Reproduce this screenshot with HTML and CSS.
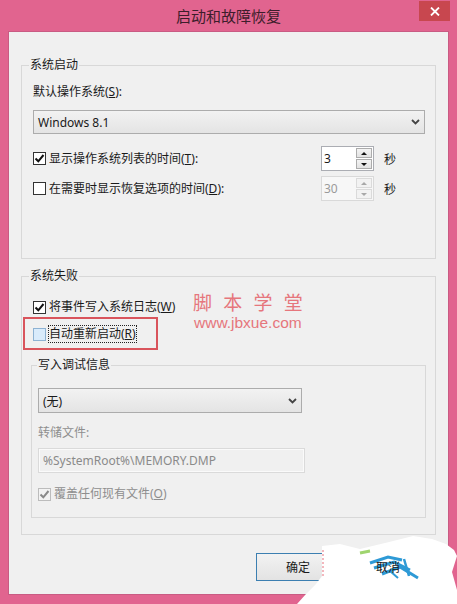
FILE: index.html
```html
<!DOCTYPE html>
<html lang="zh">
<head>
<meta charset="utf-8">
<title>启动和故障恢复</title>
<link rel="stylesheet" href="styles.css">
</head>
<body>
<div class="window">
  <div class="titlebar">
    <div class="title">启动和故障恢复</div>
    <div class="close"><svg width="10" height="9" viewBox="0 0 10 9"><path d="M1 0.5 L9 8.5 M9 0.5 L1 8.5" stroke="#fff" stroke-width="1.8" fill="none"/></svg></div>
  </div>
  <div class="panel">
    <fieldset class="group g1">
      <legend>系统启动</legend>
      <div class="label">默认操作系统(<u>S</u>):</div>
      <div class="select wide"><span>Windows 8.1</span><svg class="chev" width="9" height="6" viewBox="0 0 9 6"><path d="M1 1 L4.5 4.5 L8 1" stroke="#444" stroke-width="1.8" fill="none"/></svg></div>
      <div class="row r1">
        <div class="check"><span class="box"><svg width="11" height="11" viewBox="0 0 11 11"><path d="M1.5 5.5 L4.3 8.3 L9.5 2" stroke="#111" stroke-width="2" fill="none"/></svg></span><span>显示操作系统列表的时间(<u>T</u>):</span></div>
        <div class="spin"><span class="val">3</span><span class="arrows"><span class="arr"><i class="tri up"></i></span><span class="arr"><i class="tri down"></i></span></span></div>
        <span class="unit">秒</span>
      </div>
      <div class="row r2">
        <div class="check"><span class="box"></span><span>在需要时显示恢复选项的时间(<u>D</u>):</span></div>
        <div class="spin off"><span class="val">30</span><span class="arrows"><span class="arr"><i class="tri up"></i></span><span class="arr"><i class="tri down"></i></span></span></div>
        <span class="unit">秒</span>
      </div>
    </fieldset>

    <fieldset class="group g2">
      <legend>系统失败</legend>
      <div class="check rw"><span class="box"><svg width="11" height="11" viewBox="0 0 11 11"><path d="M1.5 5.5 L4.3 8.3 L9.5 2" stroke="#111" stroke-width="2" fill="none"/></svg></span><span>将事件写入系统日志(<u>W</u>)</span></div>
      <div class="hl">
        <div class="check"><span class="box hover"></span><span class="focus">自动重新启动(<u>R</u>)</span></div>
      </div>
      <fieldset class="group g3">
        <legend>写入调试信息</legend>
        <div class="select s2"><span>(无)</span><svg class="chev" width="9" height="6" viewBox="0 0 9 6"><path d="M1 1 L4.5 4.5 L8 1" stroke="#444" stroke-width="1.8" fill="none"/></svg></div>
        <div class="label dis dump">转储文件:</div>
        <div class="field">%SystemRoot%\MEMORY.DMP</div>
        <div class="check dis ro"><span class="box disbox"><svg width="11" height="11" viewBox="0 0 11 11"><path d="M1.5 5.5 L4.3 8.3 L9.5 2" stroke="#8a8a8a" stroke-width="2" fill="none"/></svg></span><span>覆盖任何现有文件(<u>O</u>)</span></div>
      </fieldset>
    </fieldset>

    <div class="buttons">
      <div class="btn default"><span class="btxt">确定</span></div>
      <div class="btn"><span class="btxt top">取消</span></div>
    </div>
  </div>

  <div class="watermark">
    <div class="wm-cn">脚 本 学 堂</div>
    <div class="wm-en">www.jbxue.com</div>
  </div>

  <svg class="blob" width="167" height="74" viewBox="0 0 167 74">
    <path d="M32 16 L50 14 L70 19 L95 13 L123 6 L142 9 L156 14 L164 20 L167 26 L162 42 L167 60 L167 74 L7 74 L16 64 L26 54 L32 46 Z" fill="#ffffff"/>
    <path d="M33 20 L33 46" stroke="#f0a0a8" stroke-width="1.5" stroke-dasharray="2 2" fill="none"/>
    <path d="M70 23 L80 21" stroke="#9fd46e" stroke-width="3" fill="none"/>
    <path d="M80 33 L98 27 L112 30" stroke="#2e9ad6" stroke-width="3" fill="none"/>
    <path d="M84 38 L104 32 L120 40" stroke="#2e9ad6" stroke-width="3" fill="none"/>
    <path d="M92 44 L110 37 L128 48" stroke="#2e9ad6" stroke-width="3" fill="none"/>
    <path d="M114 29 L119 46" stroke="#2e9ad6" stroke-width="2.5" fill="none"/>
    <path d="M100 41 L108 48" stroke="#2e9ad6" stroke-width="2" fill="none"/>
  </svg>
</div>
</body>
</html>
```
FILE: styles.css
```css
* { box-sizing: border-box; }
html, body { margin: 0; padding: 0; }
body {
  width: 457px;
  height: 604px;
  overflow: hidden;
  font-family: "Noto Sans", "Noto Sans CJK SC", sans-serif;
  font-size: 12px;
  color: #1a1a1a;
}
.window {
  position: relative;
  width: 457px;
  height: 604px;
  background: #e1648f;
  display: flex;
  flex-direction: column;
}
.titlebar {
  height: 31px;
  display: grid;
  grid-template-columns: 1fr auto 1fr;
  align-items: start;
}
.title {
  grid-column: 2;
  font-family: "Noto Sans CJK SC", sans-serif;
  font-size: 15px;
  line-height: 31px;
  color: #3d1d2b;
}
.close {
  grid-column: 3;
  justify-self: end;
  margin-right: 7px;
  margin-top: 1px;
  width: 31px;
  height: 20px;
  background: #c8474f;
  display: flex;
  align-items: center;
  justify-content: center;
}
.panel {
  margin: 0 8px;
  height: 564px;
  background: #f0f0f0;
  border: 1px solid #c95b83;
  padding: 25px 12px 0;
}
.group {
  margin: 0;
  min-width: 0;
  border: 1px solid #d8d8d8;
  padding: 0 10px 0 11px;
}
.group legend {
  padding: 0 1px;
  margin-left: -4px;
  line-height: 16px;
  font-size: 12px;
  color: #1a1a1a;
}
.g1 { padding-bottom: 57px; }
.label { line-height: 16px; margin-top: 11px; }
.select {
  height: 24px;
  margin-top: 10px;
  border: 1px solid #acacac;
  background: linear-gradient(#f2f2f2, #e4e4e4);
  display: flex;
  align-items: center;
  justify-content: space-between;
  padding: 0 4px 0 4px;
}
.row {
  display: grid;
  grid-template-columns: 288px 53px auto;
  align-items: center;
}
.r1 { margin-top: 12px; }
.r2 { margin-top: 5px; }
.check {
  display: flex;
  align-items: center;
  gap: 3px;
  line-height: 16px;
}
.box {
  width: 13px;
  height: 13px;
  border: 1px solid #333;
  background: #fff;
  display: flex;
  align-items: center;
  justify-content: center;
  flex: none;
}
.box.hover { background: #d9ebfb; border-color: #8db2d3; }
.box.disbox { background: #f3f3f3; border-color: #bcbcbc; }
.spin {
  height: 25px;
  border: 1px solid #abadb3;
  background: #fff;
  display: flex;
  justify-content: space-between;
  padding: 1px;
}
.spin .val { padding-left: 1px; line-height: 21px; font-size: 12px; }
.arrows {
  width: 16px;
  display: flex;
  flex-direction: column;
  gap: 1px;
}
.arr {
  flex: 1;
  border: 1px solid #acacac;
  background: linear-gradient(#f4f4f4, #e2e2e2);
  display: flex;
  align-items: center;
  justify-content: center;
}
.tri {
  width: 0;
  height: 0;
  border-left: 3px solid transparent;
  border-right: 3px solid transparent;
}
.tri.up { border-bottom: 3px solid #111; }
.tri.down { border-top: 3px solid #111; }
.spin.off { border-color: #d9d9d9; background: #f7f7f7; }
.spin.off .val { color: #9a9a9a; }
.spin.off .arr { border-color: #dadada; background: #f2f2f2; }
.spin.off .tri.up { border-bottom-color: #a8a8a8; }
.spin.off .tri.down { border-top-color: #a8a8a8; }
.unit { margin-left: 10px; }

.g2 { margin-top: 9px; padding-bottom: 16px; }
.rw { margin-top: 15px; }
.hl {
  margin: 2px 0 0 -10px;
  width: 135px;
  height: 33px;
  border: 2px solid #d9545c;
  padding: 7px 0 0 8px;
}
.focus { outline: 1px dotted #222; outline-offset: 0; }
.g3 {
  margin: 7px -1px 0 -2px;
  padding: 0 6px 15px 6px;
}
.g3 legend { margin-left: -1px; }
.s2 { width: 264px; height: 25px; margin-top: 15px; }
.dis { color: #8e8e8e; }
.dump { margin-top: 12px; }
.field {
  margin-top: 7px;
  width: 267px;
  height: 25px;
  border: 1px solid #dadada;
  box-shadow: inset 0 0 0 1px #fafafa;
  line-height: 23px;
  padding-left: 4px;
  color: #8a8a8a;
}
.ro { margin-top: 13px; }

.buttons {
  margin-top: 18px;
  display: flex;
  justify-content: flex-end;
  gap: 6px;
  padding-right: 6px;
}
.btn {
  width: 84px;
  height: 28px;
  border: 1px solid #acacac;
  background: linear-gradient(#f2f2f2, #e3e3e3);
  display: flex;
  align-items: center;
  justify-content: center;
}
.btn.default { border-color: #3c7fb1; }
.btxt { color: #1a1a1a; }
.btxt.top { position: relative; z-index: 2; }

.watermark {
  position: absolute;
  left: 193px;
  top: 292px;
  color: #e6767c;
}
.wm-cn {
  font-family: "Noto Sans CJK SC", sans-serif;
  font-size: 19px;
  line-height: 20px;
  letter-spacing: 3.5px;
}
.wm-en {
  font-family: "Liberation Sans", sans-serif;
  font-size: 15.5px;
  line-height: 15px;
  padding-top: 3px;
  margin-left: 1px;
}
.blob {
  position: absolute;
  left: 290px;
  top: 530px;
  z-index: 1;
}
```
